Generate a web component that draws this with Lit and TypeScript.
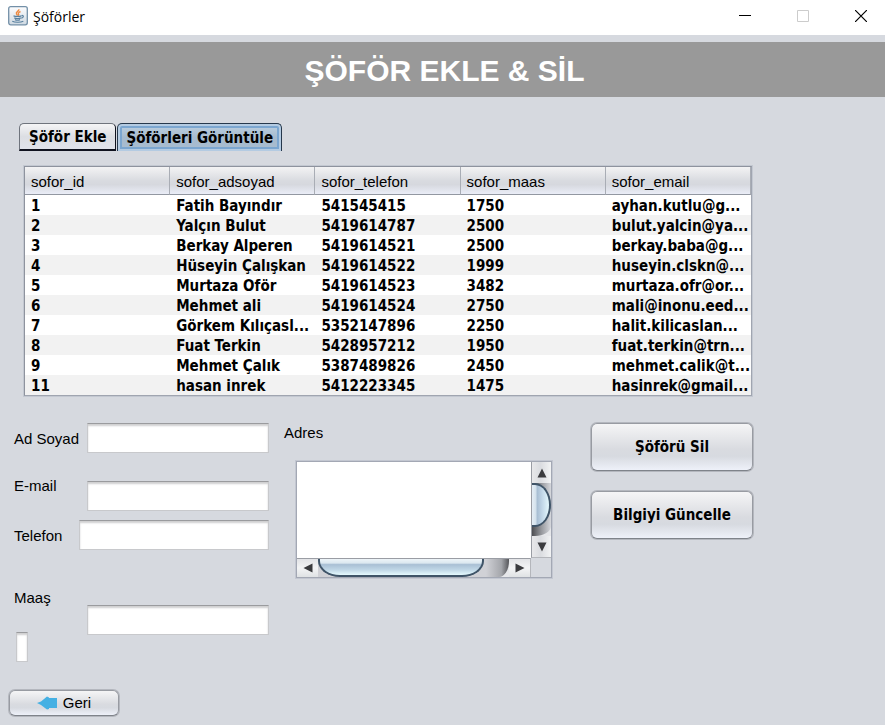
import { LitElement, html, css, svg } from "lit";
import { customElement, state } from "lit/decorators.js";
import { classMap } from "lit/directives/class-map.js";

interface Driver {
  id: string;
  name: string;
  phone: string;
  salary: string;
  email: string;
}

const DRIVERS: Driver[] = [
  { id: "1", name: "Fatih Bayındır", phone: "541545415", salary: "1750", email: "ayhan.kutlu@g..." },
  { id: "2", name: "Yalçın Bulut", phone: "5419614787", salary: "2500", email: "bulut.yalcin@ya..." },
  { id: "3", name: "Berkay Alperen", phone: "5419614521", salary: "2500", email: "berkay.baba@g..." },
  { id: "4", name: "Hüseyin Çalışkan", phone: "5419614522", salary: "1999", email: "huseyin.clskn@..." },
  { id: "5", name: "Murtaza Oför", phone: "5419614523", salary: "3482", email: "murtaza.ofr@or..." },
  { id: "6", name: "Mehmet ali", phone: "5419614524", salary: "2750", email: "mali@inonu.eed..." },
  { id: "7", name: "Görkem Kılıçasl...", phone: "5352147896", salary: "2250", email: "halit.kilicaslan..." },
  { id: "8", name: "Fuat Terkin", phone: "5428957212", salary: "1950", email: "fuat.terkin@trn..." },
  { id: "9", name: "Mehmet Çalık", phone: "5387489826", salary: "2450", email: "mehmet.calik@t..." },
  { id: "11", name: "hasan inrek", phone: "5412223345", salary: "1475", email: "hasinrek@gmail..." },
];

const COLUMNS = ["sofor_id", "sofor_adsoyad", "sofor_telefon", "sofor_maas", "sofor_email"];

@customElement("title-bar")
class TitleBar extends LitElement {
  static styles = css`
    :host {
      display: flex;
      align-items: center;
      height: 35px;
      padding: 0 1px 0 8px;
      background: #fff;
      color: #000;
      font: 14px/20px "Open Sans", "Noto Sans", sans-serif;
    }
    .logo { width: 20px; height: 20px; margin: 0 5px 4px 0; }
    .name { flex: 1; margin-bottom: 2px; }
    .controls { display: flex; gap: 12px; margin-bottom: 4px; }
    .control {
      display: grid;
      place-items: center;
      width: 46px;
      height: 30px;
      padding: 0;
      border: 0;
      background: none;
    }
    .control svg { width: 12px; height: 12px; display: block; }
  `;

  render() {
    return html`
      <svg class="logo" viewBox="0 0 20 20" aria-hidden="true">
        <defs>
          <linearGradient id="tile" x1="0" y1="0" x2="0" y2="1">
            <stop offset="0" stop-color="#fdfdfe" /><stop offset="1" stop-color="#cfd9e2" />
          </linearGradient>
        </defs>
        <rect x=".7" y=".7" width="18.6" height="18.1" rx="2" fill="url(#tile)" stroke="#7390a8" stroke-width="1.3" />
        <path d="M10.8 3.2c.8 1.8-3.6 2.8-2.3 4.8.4.7 1 1 1.3 1.5M12.5 5.5c-1.5.7-2.7 1.5-2 2.5.5.7.3 1.2-.2 1.7" fill="none" stroke="#ee8a41" stroke-width="1.4" />
        <path d="M5.5 9.7c1.5 1 6.5 1 8 0M6.300 11.900c1.500.8 5 .8 6.500 0M7 13.600c1.300.6 3.700.6 5 0M4.300 15.300c2.500 1.300 8.500 1.200 11 0M13.700 9.500c2.300-.4 2.200 2.200-.5 2.700" fill="none" stroke="#587f9e" stroke-width="1.200" />
      </svg>
      <span class="name">Şöförler</span>
      <div class="controls">
        <button class="control" aria-label="Simge durumuna küçült">
          <svg viewBox="0 0 12 12"><path d="M0 5.5h12" stroke="#000" /></svg>
        </button>
        <button class="control" aria-label="Ekranı kapla" disabled>
          <svg viewBox="0 0 12 12"><path d="M.5.5h11v11H.5z" fill="none" stroke="#ccc" /></svg>
        </button>
        <button class="control" aria-label="Kapat">
          <svg viewBox="0 0 12 12"><path d="M0 0l12 12M12 0L0 12" stroke="#000" stroke-width="1.200" /></svg>
        </button>
      </div>
    `;
  }
}

@customElement("driver-table")
class DriverTable extends LitElement {
  static styles = css`
    :host {
      display: block;
      border: 1px solid #8e939e;
      border-color: #8e939e #a0a5b0 #a0a5b0 #8e939e;
      box-shadow: 0 0 0 1px #c3c8d1;
      background: #fff;
    }
    .grid { width: 100%; border-collapse: separate; border-spacing: 0; table-layout: fixed; }
    .head {
      height: 28px;
      box-sizing: border-box;
      padding: 2px 0 0 6px;
      text-align: left;
      font: 15px/22px "Liberation Sans", Arial, sans-serif;
      border-bottom: 1px solid #9297a1;
      border-right: 1px solid #a9adb5;
      background: linear-gradient(#f3f3f4, #d9dbe0 50%, #d6d8de 65%, #eaedf7);
    }
    .cell {
      height: 20px;
      padding: 3px 0 0 6px;
      box-sizing: border-box;
      white-space: nowrap;
      font: bold 15px/17px "DejaVu Sans Condensed", "Noto Sans", sans-serif;
    }
    .row:nth-child(even) { background: #f2f2f2; }
  `;

  render() {
    return html`
      <table class="grid">
        <thead>
          <tr>${COLUMNS.map((c) => html`<th class="head" scope="col">${c}</th>`)}</tr>
        </thead>
        <tbody>
          ${DRIVERS.map(
            (d) => html`<tr class="row">
              ${[d.id, d.name, d.phone, d.salary, d.email].map((v) => html`<td class="cell">${v}</td>`)}
            </tr>`
          )}
        </tbody>
      </table>
    `;
  }
}

@customElement("scroll-area")
class ScrollArea extends LitElement {
  static styles = css`
    :host {
      display: grid;
      grid-template-columns: 1fr 20px;
      grid-template-rows: 96px 19px;
      border: 1px solid #a3a8b4;
      box-shadow: 0 0 0 1px #c3c7d1;
    }
    .text {
      box-sizing: border-box;
      width: 100%;
      height: 100%;
      margin: 0;
      padding: 4px;
      border: 0;
      outline: 0;
      resize: none;
      overflow: hidden;
      background: #fff;
      font: 15px/20px "Liberation Sans", Arial, sans-serif;
    }
    .bar { display: flex; background: #e6e7ea; overflow: hidden; }
    .vertical { flex-direction: column; border-left: 1px solid #9a9da4; border-bottom: 1px solid #b4b6bb; }
    .horizontal { border-top: 1px solid #9a9da4; border-right: 1px solid #b4b6bb; }
    .arrow {
      flex: none;
      display: grid;
      place-items: center;
      box-sizing: border-box;
      width: 21px;
      padding: 0;
      border: 0;
      background: linear-gradient(#e2e3e6, #f3f4f5 50%, #dfe2e4);
    }
    .vertical .arrow {
      width: 100%;
      height: 21px;
      background: linear-gradient(90deg, #e8e8ea, #dadce0 45%, #f2f3f4);
    }
    .arrow svg { width: 10px; height: 10px; display: block; }
    .slider { flex: 1; min-width: 0; min-height: 0; display: flex; overflow: hidden; }
    .vertical .slider {
      flex-direction: column;
      background: linear-gradient(90deg, #4d4e52, #97999e 50%, #d6d8dd);
      border-bottom-right-radius: 16px 10px;
    }
    .horizontal .slider {
      background: linear-gradient(90deg, #d0d1d6 88%, #a4a6ab 96%, #55565a);
      border-bottom-right-radius: 10px 16px;
    }
    .thumb { box-sizing: border-box; border: 2px solid #3f5468; }
    .vertical .thumb {
      height: 44px;
      border-left: 0;
      border-radius: 0 16px 16px 0 / 0 22px 22px 0;
      background: linear-gradient(90deg, #e4edf5, #d7e4ee 20%, #a9bfd4 32%, #c2d7e8 60%, #e5f8fd);
    }
    .horizontal .thumb {
      width: 87%;
      border-top: 0;
      border-radius: 0 0 22px 22px / 0 0 16px 16px;
      background: linear-gradient(#eef4f8, #dce8f0 25%, #a9bfd4 35%, #c2d9e8 70%, #e5fafe);
    }
    .corner { background: #d6d9df; }
  `;

  private arrow(label: string, d: string) {
    return html`<button type="button" class="arrow" aria-label=${label}>
      <svg viewBox="0 0 10 10">${svg`<path d=${d} fill="#3a3b3e" />`}</svg>
    </button>`;
  }

  render() {
    return html`
      <textarea class="text" aria-label="Adres"></textarea>
      <div class="bar vertical">
        ${this.arrow("Yukarı kaydır", "M5 .5L9.5 9.5H.5z")}
        <div class="slider"><div class="thumb"></div></div>
        ${this.arrow("Aşağı kaydır", "M5 9.5L.5.5H9.5z")}
      </div>
      <div class="bar horizontal">
        ${this.arrow("Sola kaydır", "M.5 5L9.5.5V9.5z")}
        <div class="slider"><div class="thumb"></div></div>
        ${this.arrow("Sağa kaydır", "M9.5 5L.5.5V9.5z")}
      </div>
      <div class="corner"></div>
    `;
  }
}

@customElement("app-root")
class AppRoot extends LitElement {
  @state() private tab = 1;

  static styles = css`
    :host {
      display: block;
      min-height: 100vh;
      background: #d6d9df;
      color: #000;
      font: 15px/20px "Liberation Sans", Arial, sans-serif;
    }
    .banner {
      margin: 7px 0 0;
      padding: 2px 0 0 4px;
      background: #999;
      color: #fff;
      text-align: center;
      font: bold 30px/53px "Liberation Sans", Arial, sans-serif;
    }
    .tabs { display: flex; gap: 1px; padding: 26px 19px 0; }
    .tab {
      box-sizing: border-box;
      height: 28px;
      padding: 0 9px;
      border: 1px solid #6f747d;
      border-bottom: 2px solid #10131f;
      border-right-color: #10131f;
      border-radius: 5px 5px 0 0;
      background: linear-gradient(#f5f5f6, #dcdee3 50%, #e0e3eb);
      color: #000;
      font: bold 15px/24px "DejaVu Sans Condensed", "Noto Sans", sans-serif;
      white-space: nowrap;
    }
    .selected {
      padding: 0 8px;
      border: 1px solid #26384c;
      border-bottom: 0;
      box-shadow: inset 0 0 0 2px #b4cbe2, inset 0 0 0 4px #7ba6d0;
      background: linear-gradient(#bfd2e2, #a5bace 50%, #a9bdd0);
    }
    .table { margin: 15px 133px 0 24px; }
    .details {
      display: grid;
      grid-template-columns: 255px 268px 162px;
      column-gap: 15px;
      margin: 27px 132px 0 14px;
    }
    .form { display: flex; flex-direction: column; }
    .line { display: flex; }
    .label { flex: none; width: 73px; }
    .short { width: 65px; }
    .email { margin-top: 23px; }
    .email .field { margin-top: 5px; }
    .phone { margin-top: 9px; }
    .salary { margin-top: 38px; }
    .salary > .field { margin-top: 17px; }
    .name .label, .phone .label { padding-top: 6px; }
    .stack { flex: none; width: 73px; display: grid; gap: 24px; }
    .field {
      box-sizing: border-box;
      flex: 1;
      min-width: 0;
      height: 30px;
      padding: 4px;
      border: 1px solid #c8c9cc;
      border-top-color: #9a9b9e;
      border-radius: 0;
      outline: 0;
      background: #fff;
      box-shadow: inset 0 2px 2px #cfcfd0;
      font: 15px/20px "Liberation Sans", Arial, sans-serif;
    }
    .tiny { width: 12px; margin-left: 2px; padding: 0; }
    .address { display: grid; align-content: start; gap: 18px; }
    .area { margin-left: 12px; }
    .actions { display: grid; grid-column: 3; align-content: start; gap: 20px; justify-self: end; width: 162px; }
    .details { grid-template-columns: 255px 1fr 162px; }
    .address { width: 268px; }
    .button {
      box-sizing: border-box;
      height: 48px;
      padding: 0;
      border: 1px solid #989ba2;
      border-bottom-color: #7f838a;
      border-radius: 6px;
      background: linear-gradient(#f5f5f6, #d9dbe0 55%, #d7dae0 70%, #eef1f9);
      box-shadow: 0 0 0 1px #b4b7be;
      color: #000;
      font: bold 15px/20px "DejaVu Sans Condensed", "Noto Sans", sans-serif;
    }
    .back {
      display: flex;
      align-items: center;
      justify-content: center;
      gap: 6px;
      width: 110px;
      height: 26px;
      margin: 28px 0 8px 9px;
      font: 15px/20px "Liberation Sans", Arial, sans-serif;
    }
    .back svg { width: 20px; height: 14px; }
  `;

  private tabButton(index: number, text: string) {
    return html`<button
      role="tab"
      class=${classMap({ tab: true, selected: this.tab === index })}
      aria-selected=${this.tab === index ? "true" : "false"}
      @click=${() => (this.tab = index)}
    >${text}</button>`;
  }

  render() {
    return html`
      <title-bar></title-bar>
      <h1 class="banner">ŞÖFÖR EKLE &amp; SİL</h1>
      <div class="tabs" role="tablist">
        ${this.tabButton(0, "Şöför Ekle")}${this.tabButton(1, "Şöförleri Görüntüle")}
      </div>
      <driver-table class="table"></driver-table>
      <section class="details">
        <form class="form" @submit=${(e: Event) => e.preventDefault()}>
          <div class="line name">
            <label class="label" for="name">Ad Soyad</label>
            <input class="field" id="name" type="text" />
          </div>
          <div class="line email">
            <label class="label" for="email">E-mail</label>
            <input class="field" id="email" type="text" />
          </div>
          <div class="line phone">
            <label class="label short" for="phone">Telefon</label>
            <input class="field" id="phone" type="text" />
          </div>
          <div class="line salary">
            <div class="stack">
              <label for="salary">Maaş</label>
              <input class="field tiny" type="text" aria-label="sofor_id" />
            </div>
            <input class="field" id="salary" type="text" />
          </div>
        </form>
        <div class="address">
          <span>Adres</span>
          <scroll-area class="area"></scroll-area>
        </div>
        <div class="actions">
          <button class="button">Şöförü Sil</button>
          <button class="button">Bilgiyi Güncelle</button>
        </div>
      </section>
      <button class="button back">
        <svg viewBox="0 0 20 14" aria-hidden="true">
          <path d="M0 7l4-1.500L10 .5l2 1V2h8v10h-8v1l-2 .5L4 9z" fill="#45b0e3" />
        </svg>
        Geri
      </button>
    `;
  }
}
